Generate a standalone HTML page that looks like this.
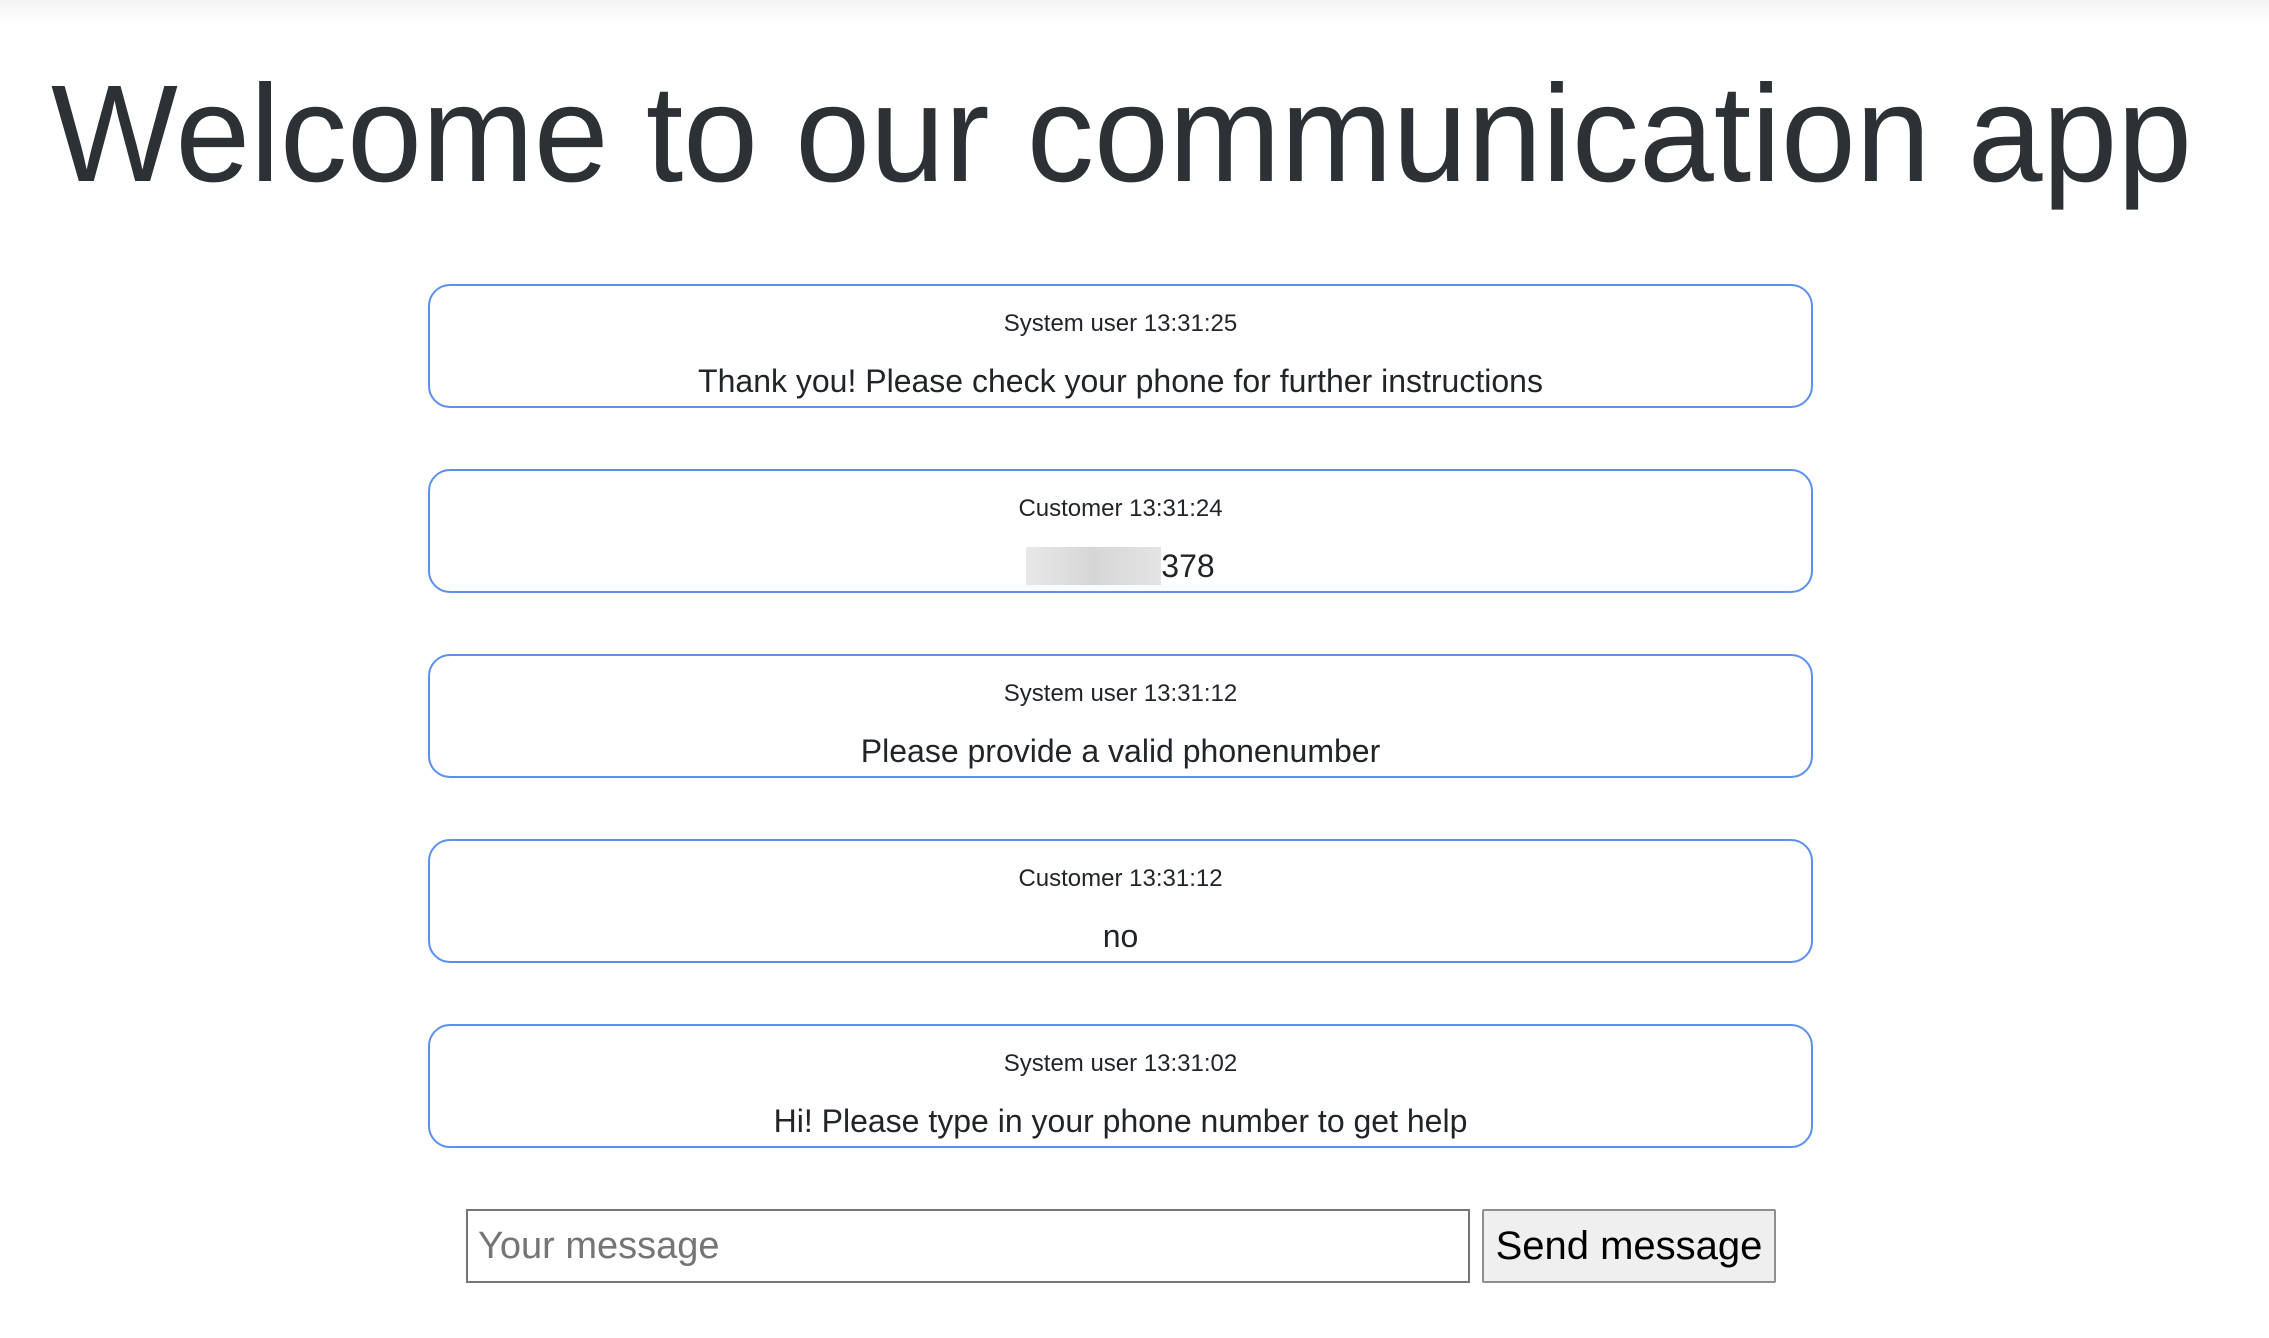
<!DOCTYPE html>
<html><head><meta charset="utf-8"><style>
html,body{margin:0;padding:0;background:#fff;width:2269px;height:1338px;overflow:hidden;font-family:"Liberation Sans",sans-serif;color:#212529}
.top{position:absolute;left:0;top:0;width:2269px;height:24px;background:linear-gradient(#f3f3f3,#fff)}
.card{position:absolute;left:428px;width:1381px;height:120px;border:2px solid #5b8ff0;border-radius:22px}
.lbl{position:absolute;left:0;right:0;top:24px;text-align:center;font-size:24px;line-height:28px}
.msg{position:absolute;left:0;right:0;top:76px;text-align:center;font-size:32px;line-height:38px}
.blur{display:inline-block;width:135px;height:38px;background:linear-gradient(90deg,#e8e8e8,#d6d6d6,#e4e4e4);vertical-align:-8px}
input{position:absolute;left:466px;top:1209px;width:1004px;height:74px;box-sizing:border-box;border:2px solid #767676;font-size:38px;padding:0 10px;font-family:"Liberation Sans",sans-serif}
input::placeholder{color:#757575}
button{position:absolute;left:1482px;top:1209px;width:294px;height:74px;box-sizing:border-box;border:2px solid #8f8f8f;border-radius:2px;background:#efefef;font-size:40px;font-family:"Liberation Sans",sans-serif;color:#000;padding:0}
</style></head><body>
<div class="top"></div>
<svg style="position:absolute;left:0;top:0" width="2269" height="220"><text x="51" y="181" font-family="Liberation Sans, sans-serif" font-size="138" fill="#2c3136" textLength="2141" lengthAdjust="spacingAndGlyphs">Welcome to our communication app</text></svg>
<div class="card" style="top:284px"><div class="lbl">System user 13:31:25</div><div class="msg">Thank you! Please check your phone for further instructions</div></div>
<div class="card" style="top:469px"><div class="lbl">Customer 13:31:24</div><div class="msg"><span class="blur"></span>378</div></div>
<div class="card" style="top:654px"><div class="lbl">System user 13:31:12</div><div class="msg">Please provide a valid phonenumber</div></div>
<div class="card" style="top:839px"><div class="lbl">Customer 13:31:12</div><div class="msg">no</div></div>
<div class="card" style="top:1024px"><div class="lbl">System user 13:31:02</div><div class="msg">Hi! Please type in your phone number to get help</div></div>
<input placeholder="Your message">
<button>Send message</button>
</body></html>
